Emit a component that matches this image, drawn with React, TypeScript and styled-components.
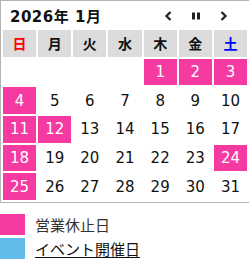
import styled, { createGlobalStyle } from 'styled-components';

const GlobalStyle = createGlobalStyle`
  html, body {
    margin: 0;
    padding: 0;
    background: #fff;
    overflow: hidden;
  }
  body {
    font-family: "DejaVu Sans", "Noto Sans CJK JP", sans-serif;
  }
`;

const Page = styled.div`
  width: 249px;
  height: 261px;
  overflow: hidden;
`;

const Calendar = styled.div`
  box-sizing: border-box;
  width: 250px;
  border: 1px solid #b4b4b4;
  padding: 0 2px 2px 2px;
`;

const TopBar = styled.div`
  display: flex;
  align-items: center;
  height: 29px;
  padding-left: 7px;
`;

const Title = styled.div`
  flex: 1;
  font-size: 15px;
  font-weight: 700;
  color: #111;
  letter-spacing: 0.5px;
`;

const Nav = styled.div`
  display: flex;
  align-items: center;
  margin-right: 9px;
`;

const NavButton = styled.button`
  display: flex;
  align-items: center;
  justify-content: center;
  width: 28px;
  height: 20px;
  border: 0;
  padding: 0;
  margin: 0;
  background: transparent;
  color: #222;
`;

const Grid = styled.div`
  display: grid;
  grid-template-columns: repeat(7, 1fr);
  grid-auto-rows: 26.7px;
  column-gap: 2.1px;
  row-gap: 2px;
`;

const DayName = styled.div<{ $tone?: 'sun' | 'sat' }>`
  display: flex;
  align-items: center;
  justify-content: center;
  background: #dcdcdc;
  font-family: "Noto Sans CJK JP", sans-serif;
  font-weight: 700;
  font-size: 14px;
  color: ${(p) => (p.$tone === 'sun' ? '#ff0000' : p.$tone === 'sat' ? '#0000ff' : '#111')};
`;

const Day = styled.div<{ $holiday?: boolean }>`
  display: flex;
  align-items: center;
  justify-content: center;
  font-size: 15px;
  color: ${(p) => (p.$holiday ? '#fff' : '#111')};
  background: ${(p) => (p.$holiday ? '#f53ba1' : 'transparent')};
`;

const Legend = styled.div`
  display: flex;
  flex-direction: column;
  gap: 2.5px;
  margin-top: 11px;
`;

const LegendRow = styled.div`
  display: flex;
  align-items: center;
  gap: 10px;
  height: 21px;
`;

const Swatch = styled.span<{ $color: string }>`
  width: 25px;
  height: 21px;
  background: ${(p) => p.$color};
`;

const LegendText = styled.span<{ $link?: boolean }>`
  font-family: "Noto Sans CJK JP", sans-serif;
  font-size: 15px;
  color: ${(p) => (p.$link ? '#111' : '#333')};
  text-decoration: ${(p) => (p.$link ? 'underline' : 'none')};
  text-underline-offset: 2px;
`;

const names = ['日', '月', '火', '水', '木', '金', '土'];
const holidays = new Set([1, 2, 3, 4, 11, 12, 18, 24, 25]);
const firstWeekday = 4;

export default function App() {
  const cells: (number | null)[] = [];
  for (let i = 0; i < firstWeekday; i++) cells.push(null);
  for (let d = 1; d <= 31; d++) cells.push(d);

  return (
    <Page>
      <GlobalStyle />
      <Calendar>
        <TopBar>
          <Title>2026年 1月</Title>
          <Nav>
            <NavButton aria-label="前の月">
              <svg width="8" height="10" viewBox="0 0 8 10">
                <path d="M6.5 1 L2.5 5 L6.5 9" fill="none" stroke="currentColor" strokeWidth="2.2" />
              </svg>
            </NavButton>
            <NavButton aria-label="一時停止">
              <svg width="8" height="8" viewBox="0 0 8 8">
                <rect x="0" y="0.5" width="3" height="7" fill="currentColor" />
                <rect x="5" y="0.5" width="3" height="7" fill="currentColor" />
              </svg>
            </NavButton>
            <NavButton aria-label="次の月">
              <svg width="8" height="10" viewBox="0 0 8 10">
                <path d="M1.5 1 L5.5 5 L1.5 9" fill="none" stroke="currentColor" strokeWidth="2.2" />
              </svg>
            </NavButton>
          </Nav>
        </TopBar>
        <Grid>
          {names.map((n, i) => (
            <DayName key={n} $tone={i === 0 ? 'sun' : i === 6 ? 'sat' : undefined}>
              {n}
            </DayName>
          ))}
          {cells.map((d, i) =>
            d === null ? (
              <Day key={`e${i}`} />
            ) : (
              <Day key={d} $holiday={holidays.has(d)}>
                {d}
              </Day>
            )
          )}
        </Grid>
      </Calendar>
      <Legend>
        <LegendRow>
          <Swatch $color="#f53ba1" />
          <LegendText>営業休止日</LegendText>
        </LegendRow>
        <LegendRow>
          <Swatch $color="#62bcea" />
          <LegendText $link>イベント開催日</LegendText>
        </LegendRow>
      </Legend>
    </Page>
  );
}
